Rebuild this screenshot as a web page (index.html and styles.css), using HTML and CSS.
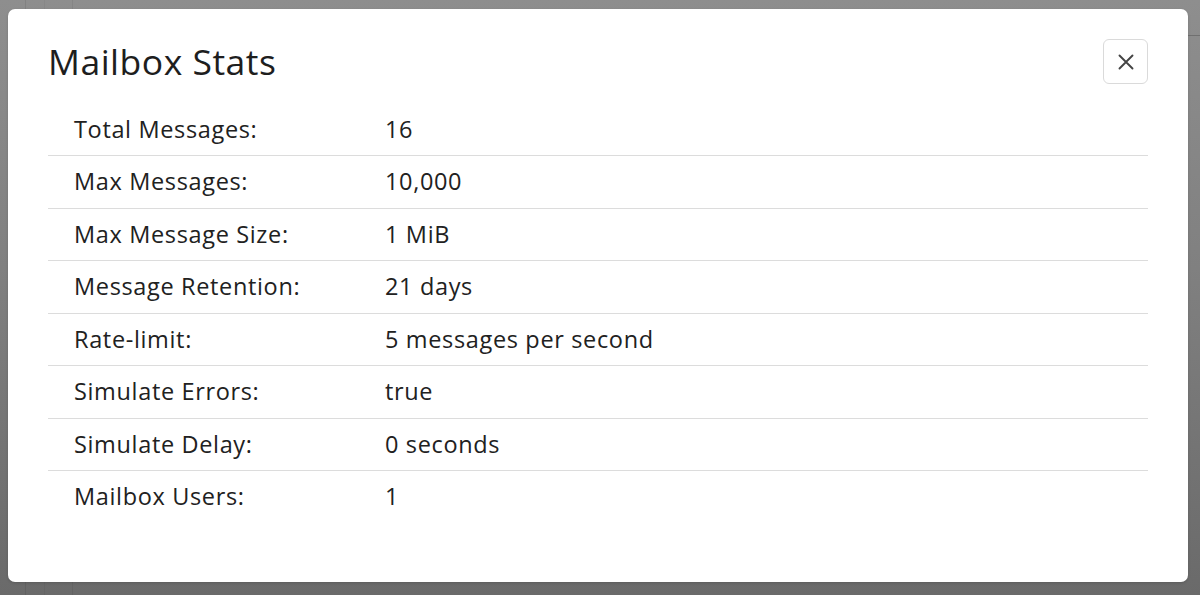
FILE: index.html
```html
<!DOCTYPE html>
<html lang="en">
<head>
<meta charset="utf-8">
<title>Mailbox Stats</title>
<link rel="stylesheet" href="styles.css">
</head>
<body>
<div class="backdrop">
  <div class="page-lines">
    <span class="vline v1"></span>
    <span class="vline v2"></span>
    <span class="vline v3"></span>
    <span class="hline"></span>
  </div>
  <div class="modal" role="dialog" aria-labelledby="modal-title">
    <div class="modal-header">
      <h2 class="modal-title" id="modal-title">Mailbox Stats</h2>
      <button class="close-btn" type="button" aria-label="Close">
        <svg width="18" height="18" viewBox="0 0 18 18" aria-hidden="true">
          <path d="M2.5 2.5 L15.5 15.5 M15.5 2.5 L2.5 15.5" stroke="#444" stroke-width="1.9" stroke-linecap="round" fill="none"/>
        </svg>
      </button>
    </div>
    <div class="stats">
      <div class="row"><div class="label">Total Messages:</div><div class="value">16</div></div>
      <div class="row"><div class="label">Max Messages:</div><div class="value">10,000</div></div>
      <div class="row"><div class="label">Max Message Size:</div><div class="value">1 MiB</div></div>
      <div class="row"><div class="label">Message Retention:</div><div class="value">21 days</div></div>
      <div class="row"><div class="label">Rate-limit:</div><div class="value">5 messages per second</div></div>
      <div class="row"><div class="label">Simulate Errors:</div><div class="value">true</div></div>
      <div class="row"><div class="label">Simulate Delay:</div><div class="value">0 seconds</div></div>
      <div class="row last"><div class="label">Mailbox Users:</div><div class="value">1</div></div>
    </div>
  </div>
</div>
</body>
</html>
```
FILE: styles.css
```css
* { box-sizing: border-box; }
html, body {
  margin: 0;
  padding: 0;
  height: 100%;
}
body {
  font-family: "Open Sans", "Noto Sans", "Liberation Sans", sans-serif;
  color: #212121;
  overflow: hidden;
}
.backdrop {
  position: relative;
  width: 1200px;
  height: 595px;
  background: linear-gradient(to bottom, #8e8e8e 0%, #808080 45%, #6a6a6a 100%);
  padding: 9px 12px 13px 8px;
}
.page-lines .vline {
  position: absolute;
  top: 0;
  width: 1px;
  height: 100%;
  background: rgba(0,0,0,0.08);
}
.page-lines .v1 { left: 25px; }
.page-lines .v2 { left: 44px; background: rgba(0,0,0,0.04); }
.page-lines .v3 { left: 72px; background: rgba(0,0,0,0.06); }
.page-lines .hline {
  position: absolute;
  right: 0;
  top: 35px;
  width: 12px;
  height: 1px;
  background: rgba(0,0,0,0.2);
}
.modal {
  position: relative;
  width: 1180px;
  height: 573px;
  background: #fff;
  border-radius: 7px;
  padding: 30px 40px 0 40px;
  box-shadow: 0 1px 3px rgba(0,0,0,0.15);
}
.modal-header {
  display: flex;
  align-items: center;
  justify-content: space-between;
  height: 45px;
  margin-bottom: 19.5px;
}
.modal-title {
  margin: 0;
  font-size: 35.5px;
  font-weight: 400;
  letter-spacing: 0.5px;
  line-height: 45px;
  color: #1e1e1e;
}
.close-btn {
  width: 45px;
  height: 45px;
  border: 1.5px solid #dadada;
  border-radius: 6px;
  background: #fff;
  display: flex;
  align-items: center;
  justify-content: center;
  padding: 0;
}
.stats {
  display: flex;
  flex-direction: column;
}
.row {
  display: grid;
  grid-template-columns: 311px 1fr;
  border-bottom: 1px solid #dcdcdc;
  padding: 8px 0;
  line-height: 35.5px;
  font-size: 23.5px;
  letter-spacing: 0.65px;
}
.row.last { border-bottom: none; }
.label, .value { padding-left: 26px; }
```
